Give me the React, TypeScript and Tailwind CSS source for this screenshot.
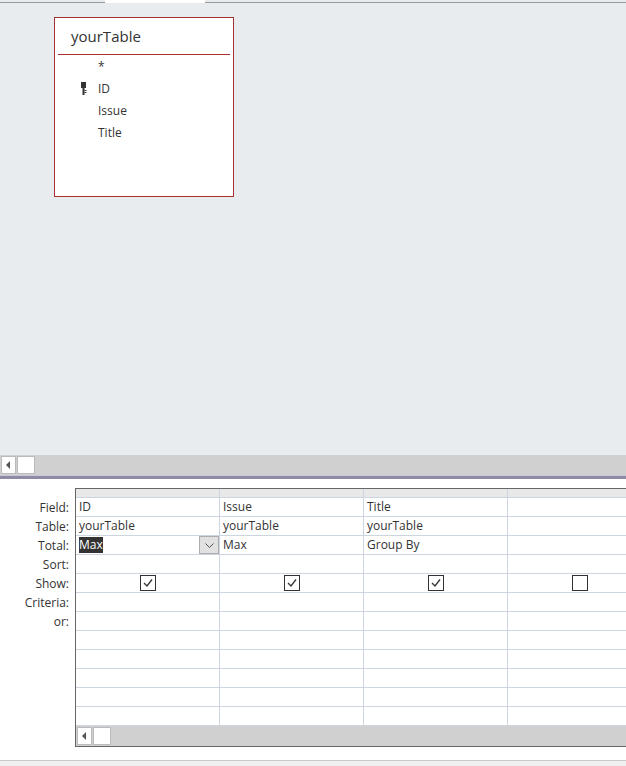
import React from 'react';

const labels = ['Field:', 'Table:', 'Total:', 'Sort:', 'Show:', 'Criteria:', 'or:'];

const cols = [
  { field: 'ID', table: 'yourTable', total: 'Max', show: true },
  { field: 'Issue', table: 'yourTable', total: 'Max', show: true },
  { field: 'Title', table: 'yourTable', total: 'Group By', show: true },
  { field: '', table: '', total: '', show: false },
];

function Check({ on }: { on: boolean }) {
  return (
    <div className="w-[16px] h-[16px] border border-[#333] bg-white flex items-center justify-center">
      {on && (
        <svg width="12" height="12" viewBox="0 0 12 12">
          <path d="M2 6 L5 9 L10 2.5" fill="none" stroke="#333" strokeWidth="1.3" />
        </svg>
      )}
    </div>
  );
}

function ScrollBar() {
  return (
    <div className="h-[20px] bg-[#d0d0d0] flex items-center gap-[1px] px-[1px]">
      <div className="w-[15px] h-[18px] bg-white border border-[#bbb] flex items-center justify-center">
        <svg width="5" height="8" viewBox="0 0 5 8"><path d="M4 0 L0 4 L4 8 Z" fill="#555" /></svg>
      </div>
      <div className="w-[18px] h-[18px] bg-white border border-[#bbb]" />
    </div>
  );
}

export default function App() {
  return (
    <div className="w-[626px] h-[766px] bg-white overflow-hidden text-[#333]" style={{ fontFamily: '"Open Sans", "Noto Sans", sans-serif' }}>
      {/* design surface */}
      <div className="h-[455px] bg-[#e9ecef] relative">
        <div className="flex h-[3px]">
          <div className="w-[105px] border-b border-[#999]" />
          <div className="w-[100px] bg-white" />
          <div className="flex-1 border-b border-[#999]" />
        </div>
        <div className="ml-[54px] mt-[14px] w-[180px] h-[180px] bg-white border border-[#a83232] flex flex-col">
          <div className="h-[36px] pl-[16px] flex items-center text-[15px]">yourTable</div>
          <div className="mx-[3px] h-[1px] bg-[#a83232]" />
          <div className="flex flex-col text-[12px] mt-[1px]">
            {['*', 'ID', 'Issue', 'Title'].map((n) => (
              <div key={n} className="h-[22px] flex items-center relative pl-[43px]">
                {n === 'ID' && (
                  <svg className="absolute left-[26px] top-[4px]" width="6" height="13" viewBox="0 0 6 13">
                    <rect x="0" y="0" width="5" height="6" fill="#333" />
                    <rect x="1.5" y="6" width="2" height="7" fill="#333" />
                    <rect x="3.5" y="8" width="2" height="1" fill="#333" />
                    <rect x="3.5" y="10" width="2" height="1" fill="#333" />
                  </svg>
                )}
                {n}
              </div>
            ))}
          </div>
        </div>
      </div>
      <ScrollBar />
      <div className="h-[1px] bg-[#c8c8d0]" />
      <div className="h-[3px] bg-[#8e8aa8]" />
      {/* design grid */}
      <div className="flex mt-[9px] text-[12px]">
        <div className="w-[75px] shrink-0 pt-[10px] pr-[6px] flex flex-col items-end">
          {labels.map((l) => (
            <div key={l} className="h-[19px] leading-[19px]">{l}</div>
          ))}
        </div>
        <div className="flex-1 min-w-0 border-l border-b border-t border-[#666] flex flex-col h-[259px]">
          <div className="flex flex-1 overflow-hidden">
            {cols.map((c, i) => (
              <div key={i} className="w-[144px] shrink-0 border-r border-[#cdd5e0] flex flex-col">
                <div className="h-[9px] bg-[#e8e8e8] border-b border-[#cdd5e0]" />
                <div className="h-[19px] border-b border-[#cdd5e0] px-[3px] leading-[18px]">{c.field}</div>
                <div className="h-[19px] border-b border-[#cdd5e0] px-[3px] leading-[18px]">{c.table}</div>
                <div className="h-[19px] border-b border-[#cdd5e0] px-[3px] leading-[18px] flex items-center justify-between">
                  {i === 0 ? (
                    <>
                      <span className="bg-[#333] text-white leading-[16px]">{c.total}</span>
                      <div className="w-[20px] h-[18px] bg-[#e1e1e1] border border-[#adadad] flex items-center justify-center -mr-[3px]">
                        <svg width="9" height="5" viewBox="0 0 9 5"><path d="M0.5 0.5 L4.5 4.5 L8.5 0.5" fill="none" stroke="#555" /></svg>
                      </div>
                    </>
                  ) : (
                    <span>{c.total}</span>
                  )}
                </div>
                <div className="h-[19px] border-b border-[#cdd5e0]" />
                <div className="h-[19px] border-b border-[#cdd5e0] flex items-center justify-center">
                  <Check on={c.show} />
                </div>
                {Array.from({ length: 7 }).map((_, r) => (
                  <div key={r} className="h-[19px] border-b border-[#cdd5e0]" />
                ))}
              </div>
            ))}
          </div>
          <ScrollBar />
        </div>
      </div>
      <div className="mt-[13px] h-[1px] bg-[#c8c8c8]" />
      <div className="h-[6px] bg-[#f0f0f0]" />
    </div>
  );
}
